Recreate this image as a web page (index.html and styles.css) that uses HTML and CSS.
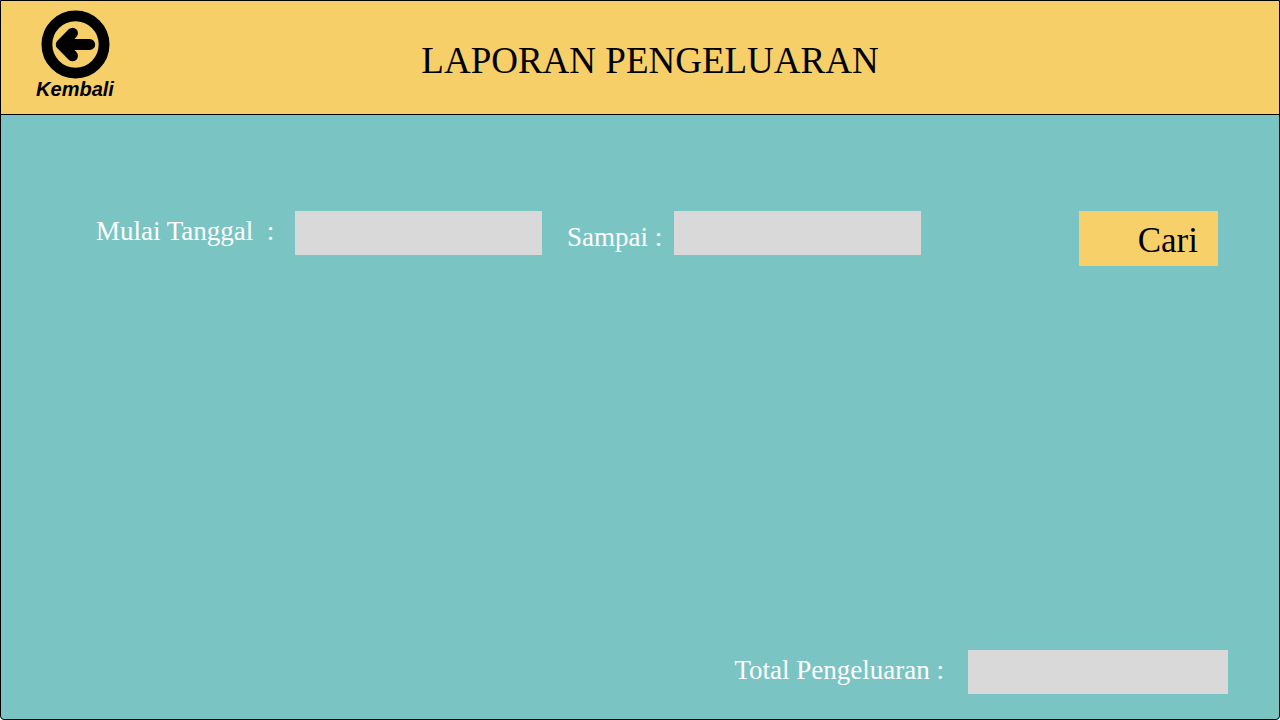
FILE: index.html
```html
<!DOCTYPE html>
<html lang="id">
<head>
<meta charset="utf-8">
<meta name="viewport" content="width=device-width, initial-scale=1">
<title>Laporan Pengeluaran</title>
<link rel="stylesheet" href="styles.css">
</head>
<body>
<div class="page">
  <header class="header">
    <a class="back" href="#">
      <svg class="back-icon" viewBox="0 0 70 70" aria-hidden="true">
        <circle cx="35.500" cy="35" r="29" fill="none" stroke="#000" stroke-width="11"/>
        <path d="M50 35H24M32.500 23.500L21 35L32.500 46.500" fill="none" stroke="#000" stroke-width="11" stroke-linecap="round" stroke-linejoin="round"/>
        <path d="M21 35L33 23V47Z" fill="#000"/>
      </svg>
      <span>Kembali</span>
    </a>
    <h1 class="title">LAPORAN PENGELUARAN</h1>
  </header>
  <main class="content">
    <form class="filter">
      <label class="label label-start" for="mulai">Mulai Tanggal &nbsp;:</label>
      <input class="field field-start" id="mulai" type="text">
      <label class="label label-end" for="sampai">Sampai :</label>
      <input class="field" id="sampai" type="text">
      <button class="search" type="button">Cari</button>
    </form>
    <div class="total">
      <label class="label" for="total">Total Pengeluaran :</label>
      <input class="field field-total" id="total" type="text" readonly>
    </div>
  </main>
</div>
</body>
</html>
```

FILE: styles.css
```css
* {
  box-sizing: border-box;
}

body {
  margin: 0;
  background: #fff;
  font-family: "Liberation Serif", serif;
}

.page {
  display: flex;
  flex-direction: column;
  min-height: 100vh;
  overflow: hidden;
  border: 1px solid #000;
  border-radius: 0 0 4px 4px;
  background: #7bc4c4;
}

.header {
  display: grid;
  grid-template-columns: 148px 1fr 128px;
  align-items: center;
  padding: 9px 0 15px;
  border-bottom: 1px solid #000;
  background: #f6cf68;
}

.back {
  display: flex;
  flex-direction: column;
  align-items: center;
  color: #000;
  font: italic 700 20px/20px "Liberation Sans", sans-serif;
  text-decoration: none;
}

.back-icon {
  width: 70px;
  height: 69px;
}

.title {
  margin: 0;
  padding-top: 12px;
  color: #000;
  font-size: 37px;
  font-weight: 400;
  line-height: 44px;
  text-align: center;
}

.content {
  display: flex;
  flex: 1;
  flex-direction: column;
  justify-content: space-between;
  gap: 40px;
  padding: 96px 51px 25px 95px;
}

.filter {
  display: flex;
  align-items: flex-start;
  padding-right: 10px;
}

.label {
  color: #fff;
  font-size: 27px;
  line-height: 40px;
  white-space: nowrap;
}

.label-start {
  width: 199px;
}

.label-end {
  padding: 6px 12px 0 0;
}

.field {
  width: 247px;
  min-width: 0;
  height: 44px;
  padding: 0 12px;
  border: 0;
  border-radius: 0;
  background: #d9d9d9;
  color: #000;
  font: 24px "Liberation Serif", serif;
}

.field-start {
  margin-right: 25px;
}

.field-total {
  width: 260px;
}

.search {
  width: 139px;
  height: 55px;
  margin-left: auto;
  padding: 4px 20px 0 0;
  border: 0;
  background: #f8d06a;
  color: #000;
  font: 35px "Liberation Serif", serif;
  text-align: right;
  cursor: pointer;
}

.total {
  display: flex;
  justify-content: flex-end;
  gap: 24px;
}
```
